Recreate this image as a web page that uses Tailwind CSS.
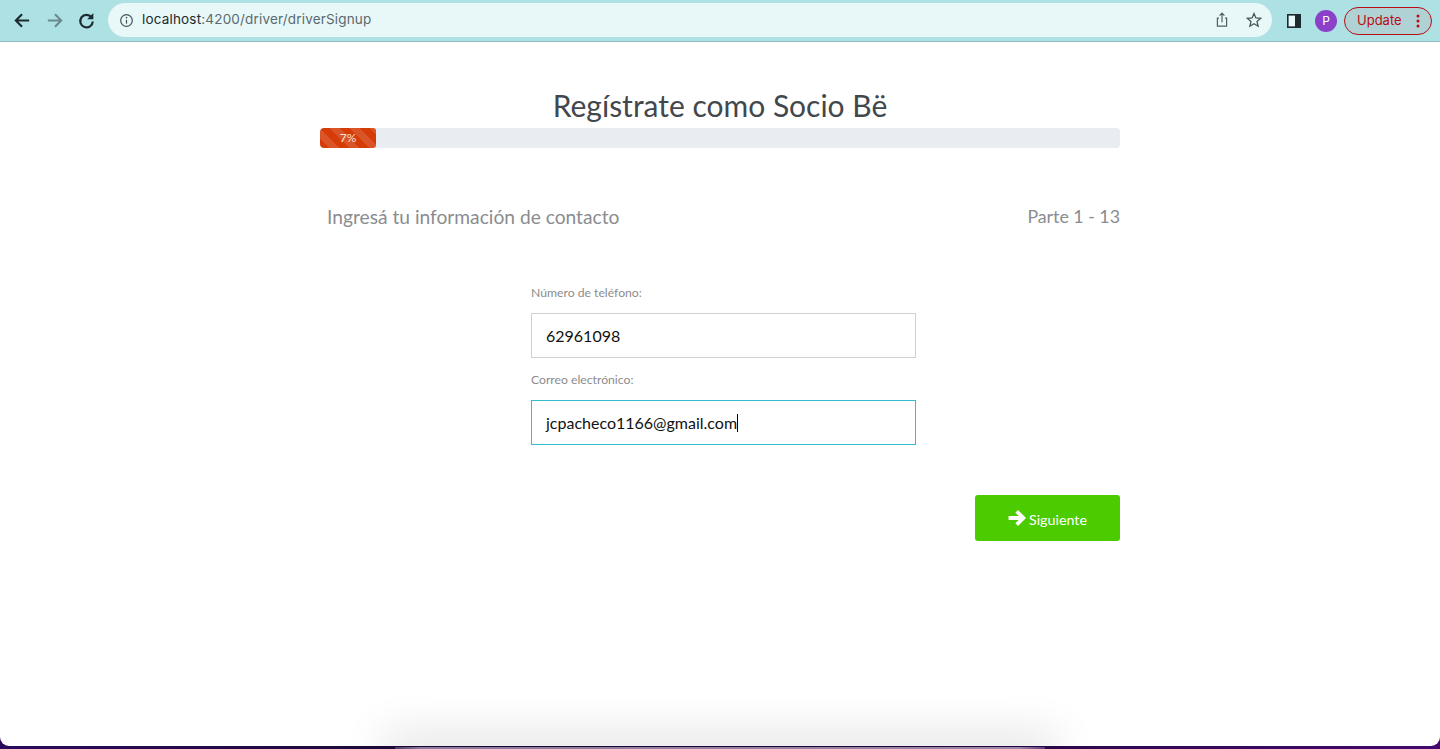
<!DOCTYPE html>
<html lang="es">
<head>
<meta charset="utf-8">
<title>Regístrate como Socio Bë</title>
<script src="https://cdn.jsdelivr.net/npm/@tailwindcss/browser@4"></script>
</head>
<body class="bg-[#1e0a3c] overflow-hidden">
<div class="relative w-[1440px] h-[749px] flex flex-col overflow-hidden bg-[linear-gradient(90deg,#2a0a5c,#1c0a35_30%,#20083c_60%,#45086e)] font-['Lato',sans-serif]">
  <!-- browser toolbar -->
  <header class="h-[42px] shrink-0 flex items-center bg-[#ade1e4] border-b border-[#8fbcc0] font-['Inter',sans-serif]">
    <div class="flex items-center w-[108px] pl-[13px] gap-[13px] pb-[1px]">
      <svg class="w-[19px] h-[19px]" viewBox="0 0 20 20" fill="none" stroke="#1d2a30" stroke-width="2.2"><path d="M17 10H3.5M9.5 3.5 3 10l6.5 6.5"/></svg>
      <svg class="w-[19px] h-[19px]" viewBox="0 0 20 20" fill="none" stroke="#6b8a8e" stroke-width="2.2"><path d="M3 10h13.5M10.5 3.5 17 10l-6.5 6.5"/></svg>
      <svg class="w-[19px] h-[19px]" viewBox="0 0 20 20" fill="none" stroke="#1d2a30" stroke-width="2.3"><path d="M15.2 6.6A6.6 6.6 0 1 0 16.6 11"/><path d="M17.2 2.2v6.4h-6.4z" fill="#1d2a30" stroke="none"/></svg>
    </div>
    <div class="w-[1164px] h-[34px] mb-[1px] rounded-full bg-[#e8f7f8] flex items-center pl-[11px] pr-[10px]">
      <svg class="w-[15px] h-[15px] mr-[8px]" viewBox="0 0 16 16" fill="none" stroke="#45555a" stroke-width="1.3"><circle cx="8" cy="8" r="6.2"/><path d="M8 7.2v4.2"/><circle cx="8" cy="4.9" r=".9" fill="#45555a" stroke="none"/></svg>
      <span class="text-[13.5px] leading-none text-[#5a6a6e] tracking-[0.013em]"><span class="text-[#1d2a30]">localhost</span>:4200/driver/driverSignup</span>
      <div class="ml-auto flex items-center gap-[16px]">
        <svg class="w-[16px] h-[16px]" viewBox="0 0 16 16" fill="none" stroke="#50605f" stroke-width="1.2"><path d="M5 6.2H3.4v8h9.2v-8H11M8 10.2V1.4M5.6 3.6 8 1.2l2.4 2.4"/></svg>
        <svg class="w-[16px] h-[16px]" viewBox="0 0 16 16" fill="none" stroke="#45555a" stroke-width="1.3"><path d="M8 1.6 9.9 6l4.7.4-3.6 3.1 1.1 4.7L8 11.7l-4.1 2.5L5 9.5 1.4 6.4 6.1 6z"/></svg>
      </div>
    </div>
    <svg class="w-[14px] h-[14px] ml-[15px]" viewBox="0 0 14 14"><path d="M0 0h14v14H0z" fill="#1d2a30"/><path d="M1.6 1.6h6.4v10.8H1.6z" fill="#e8f7f8"/></svg>
    <div class="w-[22px] h-[22px] ml-[14px] rounded-full bg-[#8a41c8] text-white text-[12px] flex items-center justify-center">P</div>
    <div class="w-[88px] h-[28px] ml-[7px] rounded-full border border-[#b90c14] bg-[#b1d2d5] text-[#b90c14] text-[13px] flex items-center pl-[12px]">
      Update
      <svg class="w-[4px] h-[14px] ml-[14px]" viewBox="0 0 4 14" fill="#b90c14"><circle cx="2" cy="2" r="1.5"/><circle cx="2" cy="7" r="1.5"/><circle cx="2" cy="12" r="1.5"/></svg>
    </div>
  </header>

  <!-- page -->
  <main class="h-[704px] shrink-0 bg-white rounded-b-[9px] flex flex-col items-center">
    <div class="w-[800px] flex flex-col">
      <h1 class="mt-[43px] h-[43px] text-center text-[30px] leading-[40px] text-[#42474c] font-normal">Regístrate como Socio Bë</h1>
      <div class="h-[20px] rounded-[4px] bg-[#e9ecf1] overflow-hidden">
        <div class="w-[56px] h-full rounded-[3px] bg-[repeating-linear-gradient(45deg,#d63c08_0,#d63c08_7px,#da5428_7px,#da5428_14px)] text-[#f8e6dd] text-[12px] leading-[20px] text-center">7%</div>
      </div>
      <div class="mt-[56px] h-[26px] flex justify-between items-center text-[#8a8c8f] leading-[26px]">
        <span class="pl-[7px] text-[19.2px]">Ingresá tu información de contacto</span>
        <span class="text-[17.8px] mb-[2px]">Parte 1 - 13</span>
      </div>
      <form class="mt-[53px] ml-[211px] w-[385px] flex flex-col">
        <label class="h-[20px] text-[12.2px] leading-[20px] text-[#8c8c8c]">Número de teléfono:</label>
        <div class="mt-[10px] h-[45px] border border-[#d0d0d0] pl-[14px] flex items-center text-[16px] text-[#111111]">62961098</div>
        <label class="mt-[12px] h-[20px] text-[12.2px] leading-[20px] text-[#8c8c8c]">Correo electrónico:</label>
        <div class="mt-[10px] h-[45px] border border-[#36bccf] pl-[14px] flex items-center text-[16px] text-[#111111]">jcpacheco1166@gmail.com<span class="w-px h-[18px] bg-black"></span></div>
      </form>
      <div class="mt-[50px] flex justify-end">
        <button class="w-[145px] h-[46px] rounded-[3px] bg-[#4ccb00] text-white text-[14.3px] flex items-center justify-center gap-[3px]">
          <svg class="w-[18px] h-[18px]" viewBox="0 0 17 17" fill="none" stroke="white" stroke-width="3.6" stroke-linejoin="miter"><path d="M.5 8.5h13M8.2 2.2l6.3 6.3-6.3 6.3"/></svg>
          <span class="mt-[4px]">Siguiente</span>
        </button>
      </div>
    </div>
  </main>

  <!-- window behind: shadow and edge at the bottom -->
  <div class="absolute left-[395px] top-[747px] w-[650px] h-[2px] bg-[linear-gradient(90deg,#4a3a68,#8c7a9e_4%,#9a86a6_96%,#5a3a78)] shadow-[0_0_44px_12px_rgba(0,0,0,0.14)]"></div>
</div>
</body>
</html>
